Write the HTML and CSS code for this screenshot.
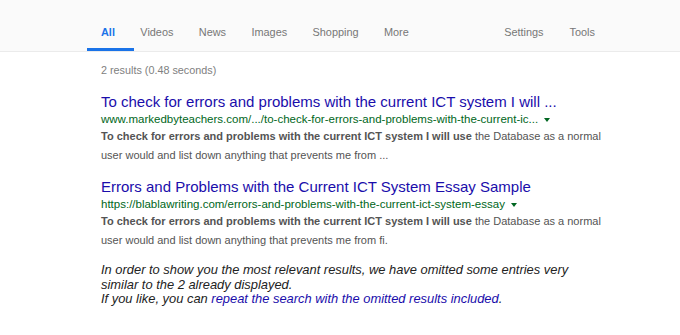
FILE: index.html
```html
<!DOCTYPE html>
<html>
<head>
<meta charset="utf-8">
<link rel="stylesheet" href="styles.css">
</head>
<body>
<div class="topbar">
  <nav class="tabs">
    <div class="tab active">All</div>
    <div class="tab">Videos</div>
    <div class="tab">News</div>
    <div class="tab">Images</div>
    <div class="tab">Shopping</div>
    <div class="tab">More</div>
  </nav>
  <nav class="tabs tools">
    <div class="tab">Settings</div>
    <div class="tab">Tools</div>
  </nav>
</div>
<main class="content">
  <div class="stats">2 results (0.48 seconds)</div>
  <div class="result">
    <a class="title">To check for errors and problems with the current ICT system I will ...</a>
    <div class="url">www.markedbyteachers.com/.../to-check-for-errors-and-problems-with-the-current-ic... <span class="arrow"></span></div>
    <div class="snippet"><b>To check for errors and problems with the current ICT system I will use</b> the Database as a normal user would and list down anything that prevents me from ...</div>
  </div>
  <div class="result">
    <a class="title">Errors and Problems with the Current ICT System Essay Sample</a>
    <div class="url">https://blablawriting.com/errors-and-problems-with-the-current-ict-system-essay <span class="arrow"></span></div>
    <div class="snippet"><b>To check for errors and problems with the current ICT system I will use</b> the Database as a normal user would and list down anything that prevents me from fi.</div>
  </div>
  <div class="omitted">
    <p>In order to show you the most relevant results, we have omitted some entries very similar to the 2 already displayed.<br>If you like, you can <a>repeat the search with the omitted results included</a>.</p>
  </div>
</main>
</body>
</html>
```
FILE: styles.css
```css
html, body { margin: 0; padding: 0; background: #fff; }
body { font-family: "Liberation Sans", Arial, sans-serif; }
.topbar {
  background: #fafafa;
  border-bottom: 1px solid #ebebeb;
  height: 52px;
  display: flex;
  justify-content: space-between;
  box-sizing: border-box;
}
.tabs { display: flex; gap: 25.4px; padding-left: 101px; }
.tools { gap: 26px; padding-left: 0; padding-right: 85px; }
.tab {
  position: relative;
  font-size: 10.9px;
  color: #777;
  line-height: 14px;
  padding-top: 25px;
}
.tab.active { color: #1a73e8; font-weight: bold; }
.tab.active::after {
  content: "";
  position: absolute;
  left: -14px;
  right: -19px;
  top: 48px;
  height: 3px;
  background: #1a73e8;
}
.content { padding-left: 101px; }
.stats { font-size: 10.8px; color: #808080; margin-top: 11px; line-height: 14px; }
.result { margin-top: 15px; }
.result + .result { margin-top: 12px; }
.title { display: block; font-size: 15px; color: #1a0dab; line-height: 19px; }
.url { font-size: 11.5px; color: #006621; line-height: 16px; white-space: nowrap; }
.arrow {
  display: inline-block;
  width: 0; height: 0;
  border-left: 3px solid transparent;
  border-right: 3px solid transparent;
  border-top: 4px solid #006621;
  margin-left: 3px;
  vertical-align: middle;
}
.snippet { font-size: 11px; color: #545454; line-height: 19px; width: 515px; }
.snippet b { color: #545454; }
.omitted { margin-top: 13px; }
.omitted p { margin: 0; font-size: 12.9px; font-style: italic; color: #222; line-height: 14.5px; width: 495px; }
.omitted a { color: #1a0dab; }
```
